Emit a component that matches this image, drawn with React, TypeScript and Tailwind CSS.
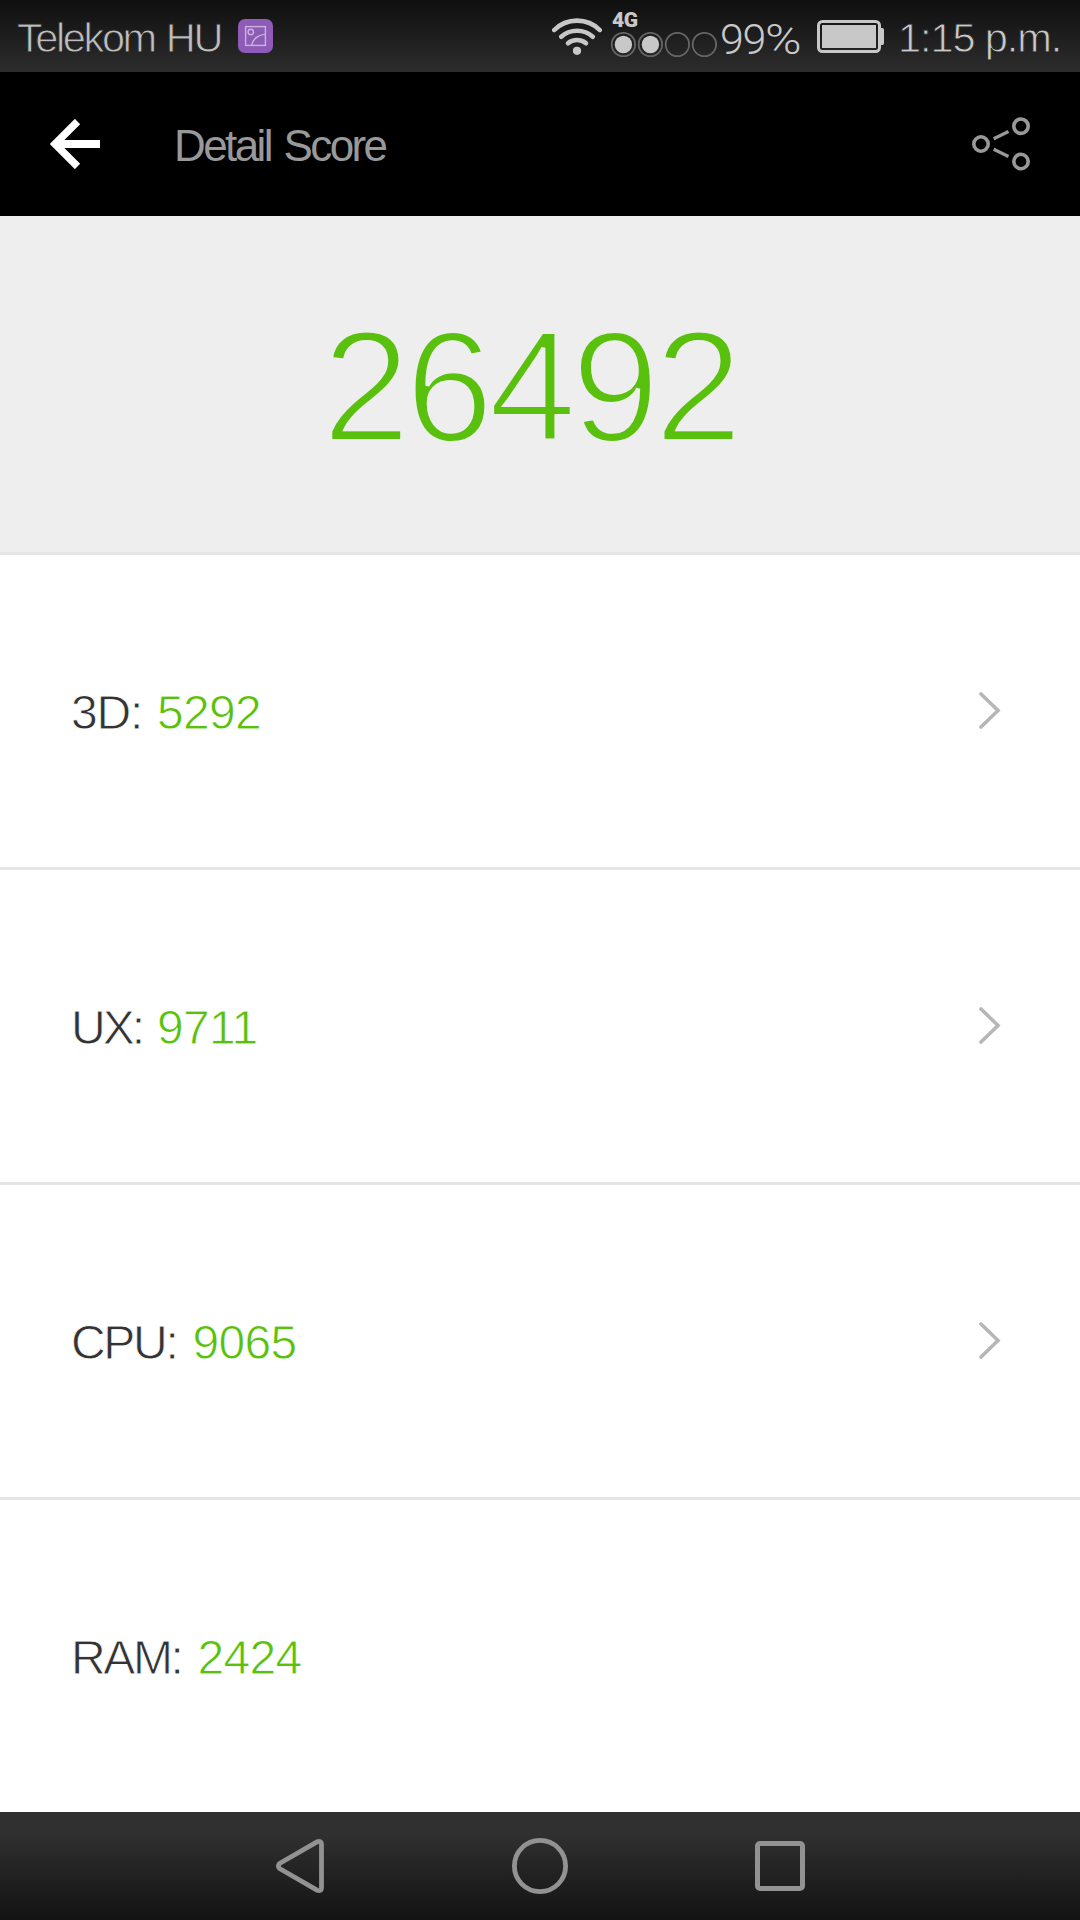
import React from "react";

const scores = [
  { label: "3D:", value: "5292", more: true, tight: "tracking-[-1.2px]", gap: "ml-[15px]" },
  { label: "UX:", value: "9711", more: true, tight: "tracking-[-3px]", gap: "ml-[15px]" },
  { label: "CPU:", value: "9065", more: true, tight: "tracking-[-2.3px]", gap: "ml-[16px]" },
  { label: "RAM:", value: "2424", more: false, tight: "tracking-[-2.4px]", gap: "ml-[16px]" },
];

function StatusBar() {
  return (
    <header className="flex h-[72px] shrink-0 items-center bg-linear-to-b from-[#0f0f0f] to-[#2d2d2d] pl-[17px] text-[#bebebe]">
      <span className="w-[221px] pt-[3px] text-[41.5px] leading-[72px] tracking-[-2.4px] [word-spacing:2px] whitespace-nowrap [-webkit-text-stroke:0.9px_#222222]">
        Telekom HU
      </span>
      <svg width="35" height="34" viewBox="0 0 35 34" fill="none">
        <rect width="35" height="34" rx="7" fill="#8e5bb7" />
        <g stroke="#c9b5d9" strokeWidth="1.4">
          <rect x="7.6" y="7.6" width="19.8" height="18.8" />
          <circle cx="12.8" cy="13" r="2.7" />
          <path d="M13.6 26.4C14.5 21 19 16 27.4 15.4" />
        </g>
      </svg>
      <svg className="ml-[279px]" width="50" height="38" viewBox="0 0 50 38" fill="none">
        <g stroke="#c8c8c8" strokeWidth="4.6" strokeLinecap="round">
          <path d="M2.3 13C14.5 0.5 35.500 0.5 47.7 13" />
          <path d="M9.2 19.8C17.8 11.8 32.2 11.8 40.8 19.8" />
          <path d="M16 26.2C20.8 22 29.2 22 34 26.2" />
        </g>
        <circle cx="25" cy="33.8" r="4.1" fill="#c8c8c8" />
      </svg>
      <div className="ml-[9px] flex h-[72px] w-[107px] flex-col pt-[9px]">
        <span className="pl-[1px] font-[Roboto] text-[21px] leading-[22px] font-black tracking-[-0.4px] text-[#c8c8c8]">4G</span>
        <svg width="107" height="27" viewBox="0 0 107 27" fill="none">
          <g stroke="#666" strokeWidth="1.8">
            <circle cx="12.4" cy="13.5" r="11.7" />
            <circle cx="39.4" cy="13.5" r="11.7" />
            <circle cx="66.4" cy="13.5" r="11.7" />
            <circle cx="93.4" cy="13.5" r="11.7" />
          </g>
          <circle cx="12.4" cy="13.5" r="8.7" fill="#c8c8c8" />
          <circle cx="39.4" cy="13.5" r="8.7" fill="#c8c8c8" />
        </svg>
      </div>
      <span className="ml-[2px] w-[97px] pt-[5px] font-[Roboto] text-[43px] leading-[72px] font-light tracking-[-1.3px] text-[#c8c8c8]">
        99<span className="inline-block origin-left scale-x-115">%</span>
      </span>
      <svg width="67" height="33" viewBox="0 0 67 33" fill="none">
        <rect x="1.5" y="1.5" width="61" height="30" rx="4" stroke="#c8c8c8" strokeWidth="3" />
        <rect x="5" y="5" width="54" height="23" fill="#c8c8c8" />
        <path d="M64 8h1.500q1.500 0 1.500 2v13q0 2-1.500 2H64z" fill="#c8c8c8" />
      </svg>
      <span className="ml-[14px] pt-[3px] text-[41.5px] leading-[72px] tracking-[-1.100px] whitespace-nowrap text-[#c8c8c8] [-webkit-text-stroke:0.9px_#222222]">
        1:15 p.m.
      </span>
    </header>
  );
}

function TitleBar() {
  return (
    <div className="flex h-[144px] shrink-0 items-center bg-black pl-[50px]">
      <svg width="50" height="50" viewBox="0 0 50 50" fill="none" stroke="#fff">
        <path d="M27.500 2.500L5 25L27.500 47.500" strokeWidth="7.500" />
        <path d="M6 25H50" strokeWidth="8" />
      </svg>
      <h1 className="ml-[74px] w-[798px] pt-[3px] text-[44px] leading-[60px] tracking-[-2.600px] text-[#999] [word-spacing:3px]">Detail Score</h1>
      <svg className="mb-[1px]" width="58" height="54" viewBox="0 0 58 54" fill="none" stroke="#999" strokeWidth="3.600">
        <circle cx="9" cy="27" r="7.200" />
        <circle cx="49" cy="9.200" r="7.200" />
        <circle cx="49" cy="44.500" r="7.200" />
        <path d="M21.700 21.800L36.500 14.600M21.700 32.200L36.500 39.400" strokeWidth="3.300" />
      </svg>
    </div>
  );
}

function NavigationBar() {
  return (
    <nav className="flex h-[108px] shrink-0 items-center bg-linear-to-b from-[#303030] from-20% to-[#131313] pl-[276px]">
      <svg width="48" height="54" viewBox="0 0 48 54" fill="none" stroke="#929292" strokeWidth="4.800" strokeLinejoin="round">
        <path d="M3.500 24.500L41 2.800Q45.500 1.500 45.500 5V49Q45.500 52.500 41 51.200L3.500 29.500Q1.400 27 3.500 24.500Z" />
      </svg>
      <svg className="ml-[188px]" width="56" height="56" viewBox="0 0 56 56" fill="none">
        <circle cx="28" cy="28" r="25.600" stroke="#929292" strokeWidth="4.800" />
      </svg>
      <div className="ml-[187px] size-[50px] rounded-[5px] border-5 border-[#929292]" />
    </nav>
  );
}

export default function App() {
  return (
    <main className="flex h-[1920px] w-[1080px] flex-col overflow-hidden bg-white font-['Liberation_Sans',sans-serif]">
      <StatusBar />
      <TitleBar />
      <section className="flex h-[339px] shrink-0 justify-center border-b-3 border-[#e5e5e5] bg-[#eee]">
        <span className="pt-[2px] pr-[20px] text-[158px] leading-[336px] tracking-[-4.800px] text-[#59c00d] [-webkit-text-stroke:4px_#eeeeee]">
          26492
        </span>
      </section>
      <section className="flex flex-1 flex-col">
        {scores.map((score) => (
          <div
            key={score.label}
            className="flex h-[315px] shrink-0 items-center border-b-3 border-[#e5e5e5] pr-[79px] pl-[71px] text-[48px] last:h-[312px] last:border-b-0 [-webkit-text-stroke:0.8px_#ffffff]"
          >
            <span className={"pt-[4px] text-[#333] " + score.tight}>{score.label}</span>
            <span className={"pt-[4px] tracking-[-0.700px] text-[#59c00d] " + score.gap}>{score.value}</span>
            {score.more && (
              <svg className="mb-[2px] ml-auto" width="22" height="37" viewBox="0 0 22 37" fill="none" stroke="#b6b6b6" strokeWidth="3.600">
                <path d="M2 2L19 18.500L2 35" strokeLinecap="round" />
              </svg>
            )}
          </div>
        ))}
      </section>
      <NavigationBar />
    </main>
  );
}
